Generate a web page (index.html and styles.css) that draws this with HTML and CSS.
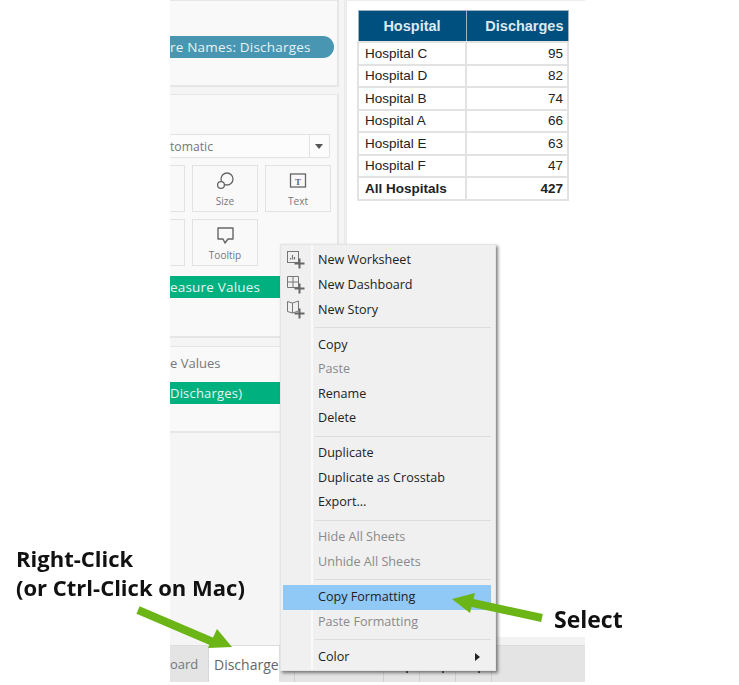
FILE: index.html
```html
<!DOCTYPE html>
<html lang="en">
<head>
    <meta charset="UTF-8">
    <meta name="viewport" content="width=device-width, initial-scale=1.0">
    <title>Copy Formatting</title>
    <link rel="stylesheet" href="styles.css">
</head>
<body>
    <div class="page">
        <div class="app">
            <div class="workspace">
                <div class="side">
                    <section class="card card-pages">
                        <div class="pill pill-blue">re Names: Discharges</div>
                    </section>
                    <section class="card card-marks">
                        <div class="dropdown">
                            <span>tomatic</span>
                            <span class="caret"></span>
                        </div>
                        <div class="tiles">
                            <div class="tile"></div>
                            <div class="tile">
                                <svg width="24" height="24" viewBox="0 0 24 24" fill="none" stroke="#666" stroke-width="1.3">
                                    <circle cx="14" cy="10" r="6"/>
                                    <circle cx="8" cy="16" r="3.4" fill="#f9f9f9"/>
                                </svg>
                                <span>Size</span>
                            </div>
                            <div class="tile">
                                <svg width="24" height="24" viewBox="0 0 24 24" fill="none">
                                    <rect x="4.5" y="5" width="15" height="13" stroke="#666" stroke-width="1.3"/>
                                    <text x="12" y="15.5" font-size="9" font-weight="700" fill="#666" text-anchor="middle" font-family="Liberation Serif, serif">T</text>
                                </svg>
                                <span>Text</span>
                            </div>
                            <div class="tile"></div>
                            <div class="tile">
                                <svg width="24" height="24" viewBox="0 0 24 24" fill="none" stroke="#666" stroke-width="1.4">
                                    <path d="M5 5h15v11h-5l-3 4-2-4H5z" stroke-linejoin="round"/>
                                </svg>
                                <span>Tooltip</span>
                            </div>
                        </div>
                        <div class="pill pill-green">easure Values</div>
                    </section>
                    <section class="card card-values">
                        <div class="card-title">e Values</div>
                        <div class="pill pill-green">Discharges)</div>
                    </section>
                </div>
                <div class="view">
                    <table class="crosstab">
                        <thead>
                            <tr><th>Hospital</th><th>Discharges</th></tr>
                        </thead>
                        <tbody>
                            <tr><td>Hospital C</td><td>95</td></tr>
                            <tr><td>Hospital D</td><td>82</td></tr>
                            <tr><td>Hospital B</td><td>74</td></tr>
                            <tr><td>Hospital A</td><td>66</td></tr>
                            <tr><td>Hospital E</td><td>63</td></tr>
                            <tr><td>Hospital F</td><td>47</td></tr>
                            <tr class="total"><td>All Hospitals</td><td>427</td></tr>
                        </tbody>
                    </table>
                </div>
            </div>
            <div class="tabs">
                <div class="tab">oard</div>
                <div class="tab tab-active">Discharge</div>
                <div class="tab-gap tab-gap-small"></div>
                <div class="tab-gap"></div>
                <div class="tab-cell"></div>
                <div class="tab-cell"></div>
                <div class="tab-cell"></div>
            </div>
        </div>

        <div class="menu">
            <div class="menu-item">
                <svg class="menu-icon" width="22" height="22" viewBox="0 0 22 22" fill="none" stroke="#777" stroke-width="1">
                    <rect x="1.5" y="2.5" width="11" height="11"/>
                    <path d="M4.5 10.5V9M6.5 10.5V6M8.5 10.5V8" stroke-width="1.2"/>
                    <path d="M8.5 14.5h10M13.5 9.5v10" stroke="#666" stroke-width="2"/>
                </svg>
                <span>New Worksheet</span>
            </div>
            <div class="menu-item">
                <svg class="menu-icon" width="22" height="22" viewBox="0 0 22 22" fill="none" stroke="#777" stroke-width="1">
                    <path d="M1.5 2.5h11v11h-11zM1.5 8h11M7 2.5v11"/>
                    <path d="M8.5 14.5h10M13.5 9.5v10" stroke="#666" stroke-width="2"/>
                </svg>
                <span>New Dashboard</span>
            </div>
            <div class="menu-item">
                <svg class="menu-icon" width="22" height="22" viewBox="0 0 22 22" fill="none" stroke="#777" stroke-width="1">
                    <path d="M1.5 2.5l5 1.5 6-2v10l-6 2-5-1.5zM6.5 4v10"/>
                    <path d="M8.5 14.5h10M13.5 9.5v10" stroke="#666" stroke-width="2"/>
                </svg>
                <span>New Story</span>
            </div>
            <div class="menu-sep"></div>
            <div class="menu-item">Copy</div>
            <div class="menu-item off">Paste</div>
            <div class="menu-item">Rename</div>
            <div class="menu-item">Delete</div>
            <div class="menu-sep"></div>
            <div class="menu-item">Duplicate</div>
            <div class="menu-item">Duplicate as Crosstab</div>
            <div class="menu-item">Export...</div>
            <div class="menu-sep"></div>
            <div class="menu-item off">Hide All Sheets</div>
            <div class="menu-item off">Unhide All Sheets</div>
            <div class="menu-sep"></div>
            <div class="menu-item selected">Copy Formatting</div>
            <div class="menu-item off">Paste Formatting</div>
            <div class="menu-sep"></div>
            <div class="menu-item">Color<span class="submenu"></span></div>
        </div>

        <div class="note note-click">Right-Click<br>(or Ctrl-Click on Mac)</div>
        <div class="note note-select">Select</div>

        <svg class="arrows" width="739" height="685" viewBox="0 0 739 685">
            <path d="M138 610L213 642" stroke="#6cb516" stroke-width="8" fill="none"/>
            <path d="M232 647L208 648L217 629z" fill="#6cb516"/>
            <path d="M542 618L468 602" stroke="#6cb516" stroke-width="8" fill="none"/>
            <path d="M452 599L475 593L470 613z" fill="#6cb516"/>
        </svg>
    </div>
</body>
</html>
```

FILE: styles.css
```css
html, body {
    margin: 0;
    background: white;
}

.page {
    position: relative;
    width: 739px;
    height: 685px;
    overflow: hidden;
    filter: blur(0.35px);
}

.app {
    margin-left: 170px;
    width: 415px;
    height: 682px;
    display: flex;
    flex-direction: column;
    background: #f3f3f3;
    font-family: "Open Sans", sans-serif;
}

.workspace {
    flex: 1;
    display: flex;
    min-height: 0;
}

/* left shelf, starts where the picture was cropped */
.side {
    box-sizing: border-box;
    width: 175px;
    display: flex;
    flex-direction: column;
    border-right: 1px solid #e8e8e8;
    background: #f5f5f5;
}

.card {
    box-sizing: border-box;
    width: 169px;
    background: #f9f9f9;
    border: 1px solid #e6e6e6;
    border-width: 1px 2px 2px 0;
}

.card-pages {
    height: 87px;
    padding-top: 35px;
    margin-bottom: 7px;
}

.card-marks {
    height: 244px;
    padding: 39px 7px 0 0;
    margin-bottom: 8px;
}

.card-values {
    height: 87px;
    padding-top: 7px;
}

.card-title {
    height: 28px;
    line-height: 19px;
    font-size: 13px;
    color: #777;
}

.pill {
    box-sizing: border-box;
    height: 22px;
    line-height: 22px;
    font-size: 13.5px;
    white-space: nowrap;
    color: #e8f3f4;
    letter-spacing: 0.2px;
}

.pill-blue {
    width: 164px;
    background: #4996b2;
    border-radius: 0 11px 11px 0;
}

.pill-green {
    background: #00b180;
}

.card-marks .pill-green {
    margin-top: 10px;
    margin-right: -7px;
}

.card-values .pill-green {
    font-size: 13px;
}

.dropdown {
    box-sizing: border-box;
    height: 24px;
    display: flex;
    justify-content: space-between;
    align-items: center;
    background: #fcfcfc;
    border: 1px solid #e2e2e2;
    border-left: 0;
    font-size: 12.2px;
    color: #777;
}

.caret {
    width: 19px;
    height: 100%;
    border-left: 1px solid #e2e2e2;
    position: relative;
}

.caret::after {
    content: "";
    position: absolute;
    left: 5px;
    top: 9px;
    border: 4px solid transparent;
    border-top: 5px solid #555;
    border-bottom: 0;
}

.tiles {
    margin-top: 7px;
    display: grid;
    grid-template-columns: 15px 66px 66px;
    grid-auto-rows: 47px;
    gap: 7px;
}

.tile {
    box-sizing: border-box;
    display: flex;
    flex-direction: column;
    align-items: center;
    justify-content: center;
    border: 1px solid #e2e2e2;
    font-size: 10px;
    color: #777;
}

.tile:nth-child(3n+1) {
    border-left: 0;
}

.tile svg {
    margin-bottom: 1px;
}

.view {
    flex: 1;
    margin-left: 1px;
    padding: 9px 0 0 10px;
    background: white;
    border-top: 1px solid #eee;
    border-left: 1px solid #e8e8e8;
    border-bottom: 8px solid #f2f2f2;
}

.crosstab {
    border-collapse: collapse;
    width: 212px;
    table-layout: fixed;
    font-family: "Liberation Sans", Arial, sans-serif;
    font-size: 13.5px;
    color: #222;
}

.crosstab th {
    height: 30px;
    padding: 0 4px;
    background: #00507f;
    color: #dce9f0;
    font-size: 14.5px;
    border: 1px solid #9ab4c6;
    text-align: center;
}

.crosstab th:first-child {
    width: 99px;
}

.crosstab th:last-child,
.crosstab td:last-child {
    text-align: right;
}

.crosstab td {
    height: 22.5px;
    padding: 0 4px 0 6px;
    box-sizing: border-box;
    border: 2px solid #e2e2e2;
}

.crosstab .total td {
    font-weight: bold;
}

.tabs {
    height: 37px;
    display: flex;
    background: #e4e4e4;
    font-size: 13px;
    color: #777;
    border-top: 1px solid #dcdcdc;
    box-sizing: border-box;
}

.tab {
    width: 38px;
    line-height: 37px;
    white-space: nowrap;
}

.tab-active {
    width: 71px;
    padding-left: 5px;
    box-sizing: border-box;
    background: white;
    color: #666;
    font-size: 14px;
    border-left: 1px solid #d8d8d8;
}

.tab-gap {
    width: 88px;
    border-right: 1px solid #d0d0d0;
}

.tab-gap-small {
    width: 15px;
}

.tab-cell {
    width: 35px;
    border-right: 1px solid #d0d0d0;
    position: relative;
}

.tab-cell::after {
    content: "";
    position: absolute;
    left: 22px;
    top: 25px;
    width: 2px;
    height: 2px;
    background: #444;
}

/* context menu */
.menu {
    position: absolute;
    left: 280px;
    top: 244px;
    box-sizing: border-box;
    width: 216px;
    height: 427px;
    padding: 3.4px 4px 0 2px;
    background: linear-gradient(to right, #f0f0f0 30px, #fafafa 30px, #fafafa 32px, #f0f0f0 32px);
    border: 1px solid #e4e4e4;
    box-shadow: 2px 2px 3px rgba(60, 60, 60, 0.65);
    font-family: "Open Sans", sans-serif;
    font-size: 12.6px;
    color: #222;
}

.menu-item {
    position: relative;
    height: 24.6px;
    line-height: 24.6px;
    padding-left: 35px;
}

.menu-item.off {
    color: #8a8a8a;
}

.menu-item.selected {
    background: #90c8f6;
}

.menu-icon {
    position: absolute;
    left: 3px;
    top: 1px;
}

.menu-sep {
    height: 1px;
    margin: 4.7px 0 4.7px 32px;
    background: #dcdcdc;
}

.submenu {
    position: absolute;
    right: 11px;
    top: 8px;
    border: 4px solid transparent;
    border-left: 5px solid #222;
    border-right: 0;
}

/* annotations on top of the screenshot */
.note {
    position: absolute;
    font-family: "Open Sans", sans-serif;
    font-weight: 700;
    color: #111;
}

.note-click {
    left: 16px;
    top: 544px;
    font-size: 22px;
    line-height: 29px;
}

.note-select {
    left: 554px;
    top: 605px;
    font-size: 23px;
    line-height: 29px;
}

.arrows {
    position: absolute;
    left: 0;
    top: 0;
    pointer-events: none;
}
```
